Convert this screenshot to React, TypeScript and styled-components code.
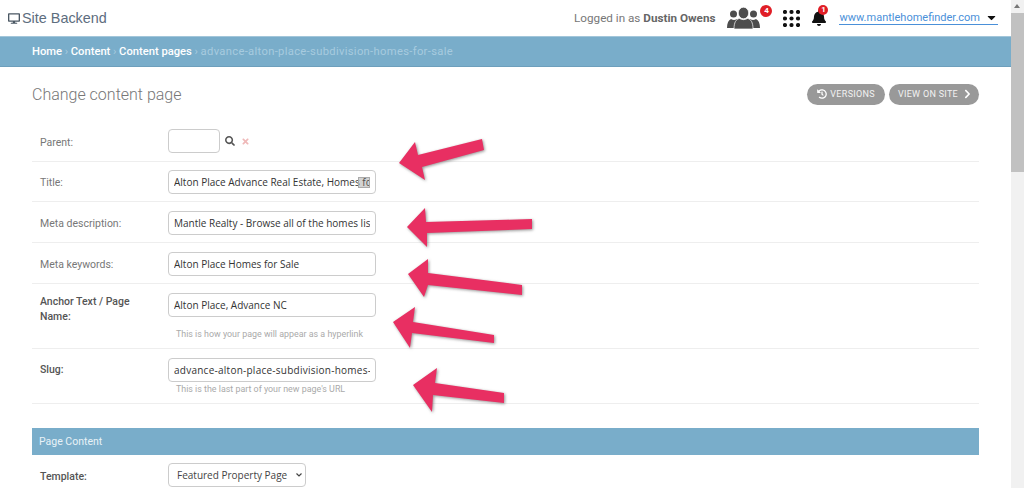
import { FC } from "react";
import styled, { createGlobalStyle } from "styled-components";
import {
  FaCaretDown,
  FaChevronRight,
  FaDesktop,
  FaBell,
  FaHistory,
  FaSearch,
  FaTimes,
} from "react-icons/fa";

const GlobalStyle = createGlobalStyle`
  html, body {
    margin: 0;
    height: 100%;
    overflow: hidden;
    background: #fff;
  }
  body {
    font-family: Roboto, "Liberation Sans", Arial, sans-serif;
  }
`;

const Page = styled.div`
  position: relative;
  display: flex;
  height: 488px;
  overflow: hidden;
`;

const Main = styled.div`
  flex: 1;
  min-width: 0;
`;

const Header = styled.header`
  height: 36px;
  display: flex;
  align-items: center;
  padding: 0 13px 0 8px;
  color: #666;
`;

const Brand = styled.div`
  display: flex;
  align-items: center;
  gap: 2px;
  font-family: "Liberation Sans", Arial, sans-serif;
  font-size: 14.4px;
  color: #5d6d7e;
  svg {
    width: 12px;
    height: 11px;
    color: #4a5763;
  }
`;

const UserTools = styled.div`
  margin-left: auto;
  display: flex;
  align-items: center;
  font-size: 11.7px;
  color: #777;
  b {
    color: #666;
    font-weight: 700;
  }
`;

const IconSlot = styled.div<{ $width: number; $gap: number }>`
  position: relative;
  width: ${(p) => p.$width}px;
  height: 24px;
  margin-left: ${(p) => p.$gap}px;
  display: flex;
  align-items: center;
`;

const Badge = styled.span<{ $right: number; $size: number }>`
  position: absolute;
  top: -1px;
  right: ${(p) => p.$right}px;
  width: ${(p) => p.$size}px;
  height: ${(p) => p.$size}px;
  border-radius: 50%;
  background: #e01e26;
  color: #fff;
  font-size: 8px;
  font-weight: 700;
  line-height: ${(p) => p.$size}px;
  text-align: center;
`;

const SiteLink = styled.a`
  margin-left: 11px;
  display: flex;
  align-items: center;
  gap: 5px;
  font-size: 11px;
  color: #4a90d9;
  border-bottom: 1px solid #4a90d9;
  line-height: 13px;
  svg {
    color: #111;
    width: 13px;
    height: 13px;
  }
`;

const Breadcrumbs = styled.nav`
  height: 29px;
  display: flex;
  align-items: center;
  gap: 2.7px;
  padding: 0 32px;
  background: #79adca;
  border-top: 1px solid #a2c6da;
  border-bottom: 1px solid #6d9fbc;
  font-size: 11.2px;
  font-weight: 500;
  color: #fff;
`;

const CrumbSeparator = styled.i`
  font-style: normal;
  font-weight: 400;
  color: #a7cbdf;
`;

const CurrentCrumb = styled.span`
  color: #a7cbdf;
  font-weight: 400;
  letter-spacing: 0.33px;
`;

const Content = styled.main`
  padding: 0 32px;
`;

const TitleBar = styled.div`
  height: 52px;
  display: flex;
  align-items: center;
  justify-content: space-between;
  padding-top: 2px;
  box-sizing: border-box;
`;

const Heading = styled.h1`
  margin: 0;
  font-size: 16px;
  font-weight: 300;
  color: #777;
`;

const ToolButtons = styled.div`
  display: flex;
  gap: 4px;
`;

const ToolButton = styled.a<{ $iconAfter?: boolean }>`
  height: 21px;
  display: flex;
  align-items: center;
  gap: ${(p) => (p.$iconAfter ? 5 : 3)}px;
  padding: ${(p) => (p.$iconAfter ? "0 7px 0 9px" : "0 10px")};
  border-radius: 11px;
  background: #999;
  color: #f2f2f2;
  font-size: 9px;
  font-weight: 400;
  letter-spacing: 0.3px;
  text-transform: uppercase;
  svg {
    width: ${(p) => (p.$iconAfter ? 9 : 10)}px;
    height: 10px;
    color: #fff;
  }
`;

const Row = styled.div<{ $height: number; $top?: number }>`
  box-sizing: border-box;
  height: ${(p) => p.$height}px;
  display: flex;
  padding: ${(p) => p.$top ?? 9}px 8px 0;
  border-bottom: 1px solid #eee;
`;

const Label = styled.label<{ $required?: boolean; $offset?: number }>`
  width: 128px;
  flex-shrink: 0;
  padding: ${(p) => p.$offset ?? 5}px 8px 0 0;
  box-sizing: border-box;
  font-size: 10.5px;
  line-height: 15px;
  font-weight: ${(p) => (p.$required ? 500 : 400)};
  color: ${(p) => (p.$required ? "#555" : "#777")};
`;

const Field = styled.div`
  display: flex;
  flex-direction: column;
`;

const InputWrap = styled.div`
  position: relative;
  align-self: flex-start;
  display: flex;
  align-items: center;
`;

const TextInput = styled.input<{ $small?: boolean; $spaced?: boolean }>`
  box-sizing: border-box;
  width: ${(p) => (p.$small ? 52 : 208)}px;
  height: 24px;
  padding: 0 5px;
  border: 1px solid #ccc;
  border-radius: 4px;
  outline: none;
  font-family: "Open Sans", "Noto Sans", sans-serif;
  font-size: 10px;
  font-weight: 500;
  letter-spacing: ${(p) => (p.$spaced ? 0.25 : 0)}px;
  color: #333;
  background: #fff;
`;

const FillIcon = styled.span`
  position: absolute;
  top: 7px;
  right: 6px;
  width: 12px;
  height: 11px;
  border: 1px solid #aaa;
  box-sizing: border-box;
  background: rgba(130, 130, 130, 0.35);
`;

const LookupIcon = styled(FaSearch)`
  width: 10px;
  height: 10px;
  margin-left: 5px;
  color: #555;
`;

const ClearIcon = styled(FaTimes)`
  width: 9px;
  height: 9px;
  margin-left: 6px;
  color: #efb9b9;
`;

const Help = styled.p<{ $gap: number }>`
  margin: ${(p) => p.$gap}px 0 0 8px;
  font-size: 8.9px;
  line-height: 12px;
  color: #aaa;
`;

const SectionBar = styled.h2`
  height: 27px;
  margin: 24px 0 0;
  padding-left: 7px;
  display: flex;
  align-items: center;
  background: #79adca;
  color: #e8f2f7;
  font-size: 10.5px;
  font-weight: 400;
`;

const SelectBox = styled.div`
  box-sizing: border-box;
  width: 138px;
  height: 24px;
  display: flex;
  align-items: center;
  justify-content: space-between;
  padding: 0 2px 0 8px;
  border: 1px solid #ccc;
  border-radius: 4px;
  font-family: "Open Sans", "Noto Sans", sans-serif;
  font-size: 10px;
  font-weight: 500;
  white-space: nowrap;
  color: #444;
  svg {
    margin-right: 1px;
  }
`;

const Scrollbar = styled.aside`
  position: relative;
  width: 13px;
  flex-shrink: 0;
  background: #f1f1f1;
`;

const ScrollUp = styled.i`
  position: absolute;
  top: 4px;
  left: 3px;
  border: 3.5px solid transparent;
  border-top: 0;
  border-bottom: 4px solid #777;
`;

const ScrollThumb = styled.div`
  position: absolute;
  top: 13px;
  left: 0;
  right: 0;
  height: 159px;
  background: #c1c1c1;
`;

const ArrowLayer = styled.svg`
  position: absolute;
  top: 0;
  left: 0;
  pointer-events: none;
  filter: drop-shadow(1px 1px 1.5px rgba(60, 60, 60, 0.55));
`;

const Arrow = styled.polygon`
  fill: #e82f62;
`;

const arrows = [
  "399,163 415,142 418,155 482,139 484,150 422,167 425,180",
  "407,227 425,208 426,222 532,219 532,229 427,233 427,247",
  "408,274 428,259 428,273 522,285 522,295 428,285 424,297",
  "393,322 415,307 413,322 494,335 494,343 412,333 410,348",
  "413,385 437,368 435,383 504,393 504,403 433,395 432,412",
];

const UsersIcon: FC = () => (
  <svg width="33" height="22" viewBox="0 0 33 22" fill="#4d4d4d">
    <circle cx="6.500" cy="7" r="3.500" />
    <circle cx="26.500" cy="7" r="3.500" />
    <path d="M0 21c0-5 1.500-8 4-9 2 1.200 4 1.200 6 0l4 9z" />
    <path d="M33 21c0-5-1.500-8-4-9-2 1.200-4 1.200-6 0l-4 9z" />
    <ellipse cx="16.500" cy="6" rx="5.200" ry="5.800" stroke="#fff" strokeWidth="0.700" />
    <path
      d="M7 22c0-6.500 2-10 5.500-10.500 2.500 1.500 5.500 1.500 8 0 3.500 0.500 5.500 4 5.500 10.500z"
      stroke="#fff"
      strokeWidth="0.700"
    />
  </svg>
);

const GridIcon: FC = () => (
  <svg width="17" height="17" viewBox="0 0 17 17" fill="#111">
    {[2, 8.5, 15].flatMap((y) =>
      [2, 8.5, 15].map((x) => <circle key={`${x}-${y}`} cx={x} cy={y} r="2.100" />)
    )}
  </svg>
);

export default function App() {
  return (
    <Page>
      <GlobalStyle />
      <Main>
        <Header>
          <Brand>
            <FaDesktop />
            Site Backend
          </Brand>
          <UserTools>
            <span>
              Logged in as <b>Dustin Owens</b>
            </span>
            <IconSlot $width={45} $gap={12}>
              <UsersIcon />
              <Badge $right={0} $size={12}>4</Badge>
            </IconSlot>
            <IconSlot $width={17} $gap={11}>
              <GridIcon />
            </IconSlot>
            <IconSlot $width={17} $gap={11}>
              <FaBell size={16} color="#111" />
              <Badge $right={0} $size={10}>1</Badge>
            </IconSlot>
            <SiteLink>
              www.mantlehomefinder.com
              <FaCaretDown />
            </SiteLink>
          </UserTools>
        </Header>
        <Breadcrumbs>
          Home <CrumbSeparator>›</CrumbSeparator> Content <CrumbSeparator>›</CrumbSeparator> Content pages{" "}
          <CrumbSeparator>›</CrumbSeparator>
          <CurrentCrumb>advance-alton-place-subdivision-homes-for-sale</CurrentCrumb>
        </Breadcrumbs>
        <Content>
          <TitleBar>
            <Heading>Change content page</Heading>
            <ToolButtons>
              <ToolButton>
                <FaHistory />
                Versions
              </ToolButton>
              <ToolButton $iconAfter>
                View on site
                <FaChevronRight />
              </ToolButton>
            </ToolButtons>
          </TitleBar>
          <Row $height={43} $top={10}>
            <Label $offset={6}>Parent:</Label>
            <InputWrap>
              <TextInput $small readOnly value="" />
              <LookupIcon />
              <ClearIcon />
            </InputWrap>
          </Row>
          <Row $height={40} $top={8}>
            <Label>Title:</Label>
            <InputWrap>
              <TextInput readOnly value="Alton Place Advance Real Estate, Homes for Sale" />
              <FillIcon />
            </InputWrap>
          </Row>
          <Row $height={41}>
            <Label>Meta description:</Label>
            <TextInput readOnly value="Mantle Realty - Browse all of the homes listed in Alton Place" />
          </Row>
          <Row $height={41}>
            <Label>Meta keywords:</Label>
            <TextInput readOnly value="Alton Place Homes for Sale" />
          </Row>
          <Row $height={65}>
            <Label $required $offset={1}>Anchor Text / Page Name:</Label>
            <Field>
              <TextInput readOnly value="Alton Place, Advance NC" />
              <Help $gap={11}>This is how your page will appear as a hyperlink</Help>
            </Field>
          </Row>
          <Row $height={55}>
            <Label $required $offset={4}>Slug:</Label>
            <Field>
              <TextInput $spaced readOnly value="advance-alton-place-subdivision-homes-for-sale" />
              <Help $gap={1}>This is the last part of your new page's URL</Help>
            </Field>
          </Row>
          <SectionBar>Page Content</SectionBar>
          <Row $height={40} $top={8}>
            <Label $required $offset={6}>Template:</Label>
            <SelectBox>
              Featured Property Page
              <svg width="6" height="4" viewBox="0 0 6 4" fill="none" stroke="#444" strokeWidth="1.200">
                <path d="M0.500 0.500l2.500 2.500 2.500-2.500" />
              </svg>
            </SelectBox>
          </Row>
        </Content>
      </Main>
      <Scrollbar>
        <ScrollUp />
        <ScrollThumb />
      </Scrollbar>
      <ArrowLayer width="1024" height="488" viewBox="0 0 1024 488">
        {arrows.map((points) => (
          <Arrow key={points} points={points} />
        ))}
      </ArrowLayer>
    </Page>
  );
}
